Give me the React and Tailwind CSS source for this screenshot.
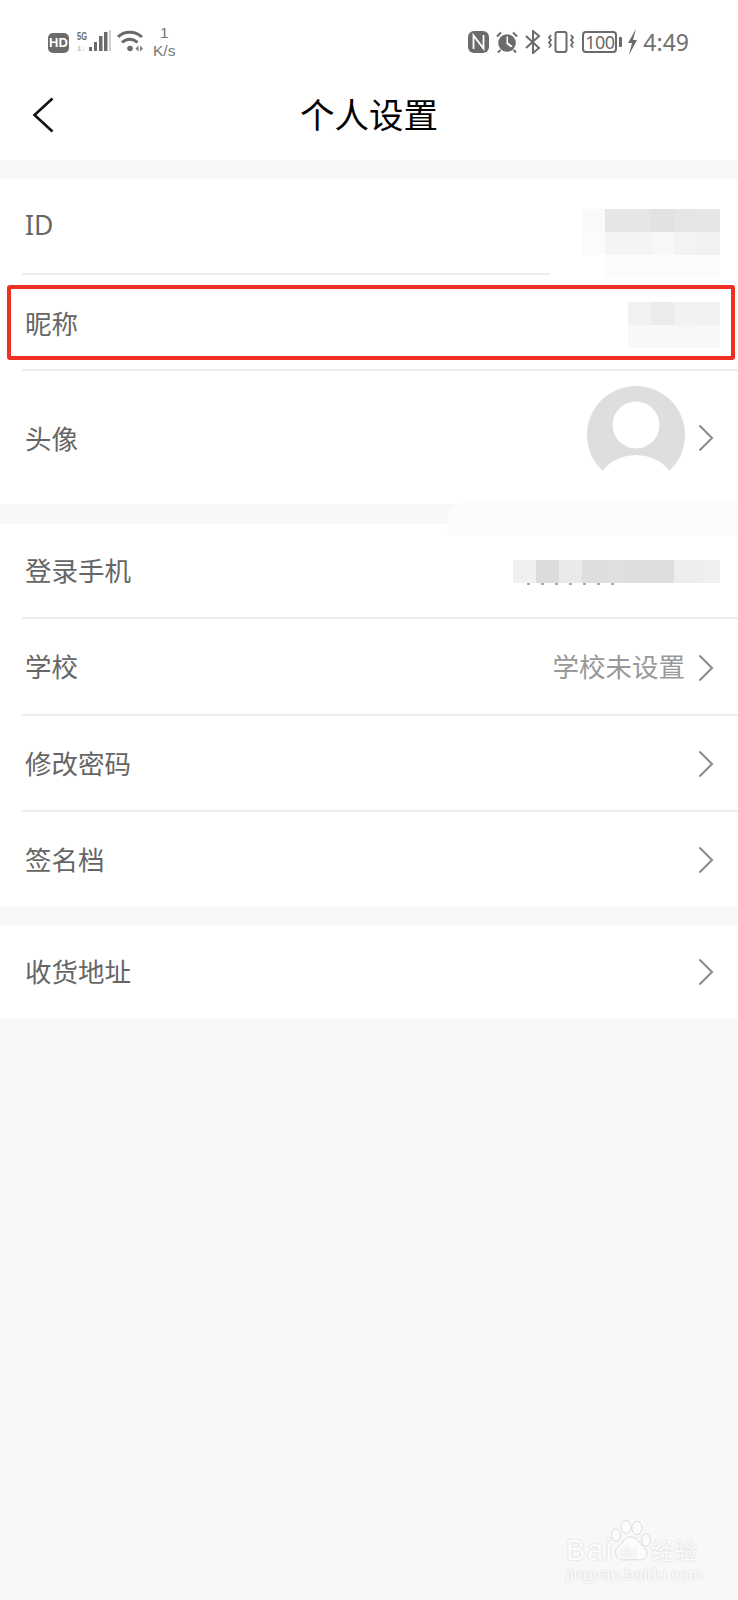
const cjk = "font-['Noto_Sans_CJK_SC','Noto_Sans',sans-serif]";

const Chevron = () => (
    <svg width="16" height="28" viewBox="0 0 16 28" fill="none" className="shrink-0">
        <path d="M1.5 1.5 L14 14 L1.5 26.5" stroke="#8a8a8a" strokeWidth="2" />
    </svg>
);

const Mosaic = ({ rows }) => (
    <div className="flex flex-col">
        {rows.map((row, i) => (
            <div key={i} className="flex">
                {row.map((c, j) => (
                    <div key={j} className="w-[23px] h-[23px]" style={{ backgroundColor: c }} />
                ))}
            </div>
        ))}
    </div>
);

const Row = ({ label, height = "h-[96px]", divider = true, children, dividerClass = "right-0", labelClass = "mb-[4px]" }) => (
    <div className={`relative flex items-center justify-between pl-[25px] pr-[24px] ${height}`}>
        <span className={`text-[26.5px] text-[#666666] ${labelClass}`}>{label}</span>
        <div className="flex items-center gap-[13px]">{children}</div>
        {divider && <div className={`absolute left-[22px] bottom-0 h-[2px] bg-[#eeeeee] ${dividerClass}`} />}
    </div>
);

const StatusBar = () => (
    <div className="h-[80px] relative flex justify-between items-start pt-[30px] pl-[48px] pr-[49px] text-[#6b6b6b]">
        <div className="flex items-start">
            <div className="mt-[3px] w-[21px] h-[20px] rounded-[5px] bg-[#6b6b6b] text-white text-[13px] font-bold leading-[20px] text-center font-['Liberation_Sans',sans-serif]">HD</div>
            <svg width="34" height="24" viewBox="0 0 34 24" className="ml-[8px]">
                <text x="0" y="10" fontSize="10" fontWeight="700" fontFamily="Liberation Sans, sans-serif" fill="#6b6b6b" textLength="10" lengthAdjust="spacingAndGlyphs">5G</text>
                <text x="0" y="21" fontSize="8" fontWeight="700" fontFamily="Liberation Sans, sans-serif" fill="#c4c4c4">1↓</text>
                <rect x="12" y="17" width="3" height="4" fill="#6b6b6b" />
                <rect x="17" y="12" width="3" height="9" fill="#6b6b6b" />
                <rect x="22" y="6" width="3.5" height="15" fill="#6b6b6b" />
                <rect x="27" y="2" width="3.5" height="19" fill="#6b6b6b" />
                <rect x="32" y="0" width="2" height="21" fill="#d0d0d0" />
            </svg>
            <svg width="27" height="24" viewBox="0 0 27 24" className="ml-[6px]" fill="none">
                <path d="M1 7 C7 0.5 18 0.5 25 7" stroke="#6b6b6b" strokeWidth="3" />
                <path d="M5 12.5 C9.5 8 16 8 20.5 12.5" stroke="#6b6b6b" strokeWidth="3" />
                <circle cx="13" cy="18.5" r="2.8" fill="#6b6b6b" />
                <path d="M18.5 18.5 L21.5 15.5 L21.5 21.5 Z M23 15.5 L26 18.5 L23 21.5 Z" fill="#7a7a7a" />
            </svg>
            <div className="ml-[9px] -mt-[6px] flex flex-col items-center text-[15.5px] leading-[18px] text-[#777777] font-['Liberation_Sans',sans-serif]">
                <span>1</span>
                <span>K/s</span>
            </div>
        </div>
        <div className="flex items-start">
            <svg width="21" height="22" viewBox="0 0 21 22" className="mt-[1px]">
                <rect width="21" height="22" rx="6" fill="#6b6b6b" />
                <path d="M5.5 18 V4.5 L15.5 17.5 V4" stroke="#fff" strokeWidth="1.8" fill="none" />
            </svg>
            <svg width="22" height="22" viewBox="0 0 22 22" className="ml-[7px] mt-[1px]" fill="none">
                <circle cx="11" cy="12" r="8.8" fill="#6b6b6b" />
                <path d="M10.5 5.5 H12 V11.5 L16.5 15 L15 16.5 L10.5 13 Z" fill="#fff" />
                <path d="M1 5.5 L5 1.5 M17 1.5 L21 5.5 M4.5 19 L2 21.5 M17.5 19 L20 21.5" stroke="#6b6b6b" strokeWidth="2" />
            </svg>
            <svg width="16" height="24" viewBox="0 0 16 24" fill="none" className="ml-[7px]">
                <path d="M1 6 L14 18 L8 23 V1 L14 6 L1 18" stroke="#6b6b6b" strokeWidth="2" />
            </svg>
            <svg width="26" height="22" viewBox="0 0 26 22" fill="none" className="ml-[7px] mt-[1px]">
                <rect x="7.5" y="1" width="11" height="20" rx="2" stroke="#6b6b6b" strokeWidth="2" />
                <path d="M3 4 L1 6.5 L3 9 L1 11.5 L3 14 L1 16.5 M23 4 L25 6.5 L23 9 L25 11.5 L23 14 L25 16.5" stroke="#6b6b6b" strokeWidth="1.8" />
            </svg>
            <div className="flex items-center h-[24px] ml-[8px]">
                <div className="w-[35px] h-[22px] border-2 border-[#6b6b6b] rounded-[4px] text-[18px] leading-[18px] text-center tracking-[-0.5px] font-['Noto_Sans',sans-serif]">100</div>
                <div className="ml-[2px] w-[3px] h-[10px] rounded-r-[1px] bg-[#6b6b6b]" />
            </div>
            <svg width="11" height="26" viewBox="0 0 11 26" className="-mt-[1px] ml-[5px]">
                <path d="M9 0 L1 14 L5 14 L2 26 L10 11 L6 11 Z" fill="#6b6b6b" />
            </svg>
            <span className="-mt-[2px] ml-[5px] text-[23px] leading-[28px] text-[#6f6f6f] font-['Noto_Sans',sans-serif]">4:49</span>
        </div>
    </div>
);

const Watermark = () => (
    <div className="absolute left-[566px] top-[1520px] w-[134px] h-[64px] text-[#fdfdfd] [text-shadow:0_0_2px_#c8c8c8]">
        <span className="absolute left-0 top-[14px] text-[29px] leading-[32px] tracking-[2px] font-['Liberation_Sans',sans-serif]">Bai</span>
        <svg width="42" height="42" viewBox="0 0 42 42" className="absolute left-[44px] top-0">
            <g fill="#fcfcfc" stroke="#dcdcdc" strokeWidth="1">
                <ellipse cx="6" cy="15" rx="4.5" ry="6" />
                <ellipse cx="16" cy="7" rx="5" ry="6.5" />
                <ellipse cx="27" cy="8" rx="5" ry="6.5" />
                <ellipse cx="36" cy="20" rx="4.5" ry="6" />
                <path d="M21 17 C14 17 13 24 8 27 C3 31 6 40 13 40 C18 40 24 39 30 40 C37 40 39 32 35 28 C30 25 28 17 21 17 Z" />
            </g>
        </svg>
        <span className="absolute left-[54px] top-[24px] text-[15px] leading-[16px] font-['Liberation_Sans',sans-serif]">du</span>
        <span className={`absolute left-[85px] top-[15px] text-[23px] leading-[28px] ${cjk}`}>经验</span>
        <span className="absolute left-0 top-[46px] text-[17px] leading-[18px] whitespace-nowrap font-['Liberation_Sans',sans-serif]">jingyan.baidu.com</span>
    </div>
);

export default function App() {
    return (
        <div className={`relative w-[738px] h-[1600px] overflow-hidden bg-[#f8f8f8] ${cjk}`}>
            <div className="bg-white h-[160px]">
                <StatusBar />
                <div className="relative h-[80px] flex items-center justify-center pb-[14px]">
                    <svg width="22" height="36" viewBox="0 0 22 36" fill="none" className="absolute left-[32px] top-[17px]">
                        <path d="M20.5 1.5 L2.5 18 L20.5 34.5" stroke="#111111" strokeWidth="2.6" />
                    </svg>
                    <h1 className="text-[34.5px] leading-[44px] text-black font-normal">个人设置</h1>
                </div>
            </div>

            <div className="mt-[19px] bg-white">
                <Row label="ID" dividerClass="right-[188px]" labelClass="mb-[2px] font-['Noto_Sans',sans-serif]">
                    <div className="mr-[-6px] mt-[32px]">
                        <Mosaic rows={[
                            ["#fafafa", "#e6e6e6", "#e6e6e6", "#e2e2e2", "#e5e5e5", "#e6e6e6"],
                            ["#fbfbfb", "#f4f4f4", "#f4f4f4", "#f7f7f7", "#f3f3f3", "#f1f1f1"],
                            ["#ffffff", "#fcfcfc", "#fcfcfc", "#fcfcfc", "#fcfcfc", "#fcfcfc"],
                        ]} />
                    </div>
                </Row>
                <Row label="昵称" labelClass="mb-[1px]">
                    <div className="mr-[-6px] mt-[4px]">
                        <Mosaic rows={[
                            ["#f1f1f1", "#ebebeb", "#f2f2f2", "#f1f1f1"],
                            ["#f8f8f8", "#f8f8f8", "#f7f7f7", "#f8f8f8"],
                        ]} />
                    </div>
                    <div className="absolute left-[7px] right-[3px] top-[10px] bottom-[11px] border-[4px] border-[#ee2f22] rounded-[3px]" />
                </Row>
                <Row label="头像" height="h-[133px]" divider={false} labelClass="">
                    <svg width="98" height="98" viewBox="0 0 98 98" className="mb-[5px]">
                        <defs>
                            <clipPath id="avatarClip">
                                <rect width="98" height="85" />
                            </clipPath>
                        </defs>
                        <circle cx="49" cy="49" r="49" fill="#dedede" clipPath="url(#avatarClip)" />
                        <circle cx="49" cy="39" r="23.5" fill="#ffffff" />
                        <ellipse cx="49" cy="108" rx="42" ry="39" fill="#ffffff" />
                    </svg>
                    <Chevron />
                </Row>
            </div>

            <div className="relative h-[20px]">
                <div className="absolute left-[447px] right-0 -top-[3px] -bottom-[11px] bg-[#fcfcfc] rounded-tl-[24px]" />
            </div>

            <div className="bg-white">
                <Row label="登录手机" height="h-[95px]">
                    <div className="relative mr-[-6px] h-[25px] mt-[2px]">
                        <Mosaic rows={[["#f0f0f0", "#dcdcdc", "#eaeaea", "#dedede", "#dedfe0", "#dedede", "#dedede", "#ededed", "#efefef"]]} />
                        <div className="absolute left-[14px] top-[23px] h-[2px] w-[90px] bg-[repeating-linear-gradient(90deg,#aaaaaa_0,#aaaaaa_3px,transparent_3px,transparent_14px)]" />
                    </div>
                </Row>
                <Row label="学校" height="h-[97px]">
                    <span className="text-[26.5px] text-[#999999] mb-[4px]">学校未设置</span>
                    <Chevron />
                </Row>
                <Row label="修改密码" height="h-[96px]" labelClass="mb-[3px]">
                    <Chevron />
                </Row>
                <Row label="签名档" height="h-[95px]" divider={false} labelClass="mb-[2px]">
                    <Chevron />
                </Row>
            </div>

            <div className="mt-[18px] bg-white">
                <Row label="收货地址" height="h-[94px]" divider={false} labelClass="mb-[2px]">
                    <Chevron />
                </Row>
            </div>

            <Watermark />
        </div>
    );
}
